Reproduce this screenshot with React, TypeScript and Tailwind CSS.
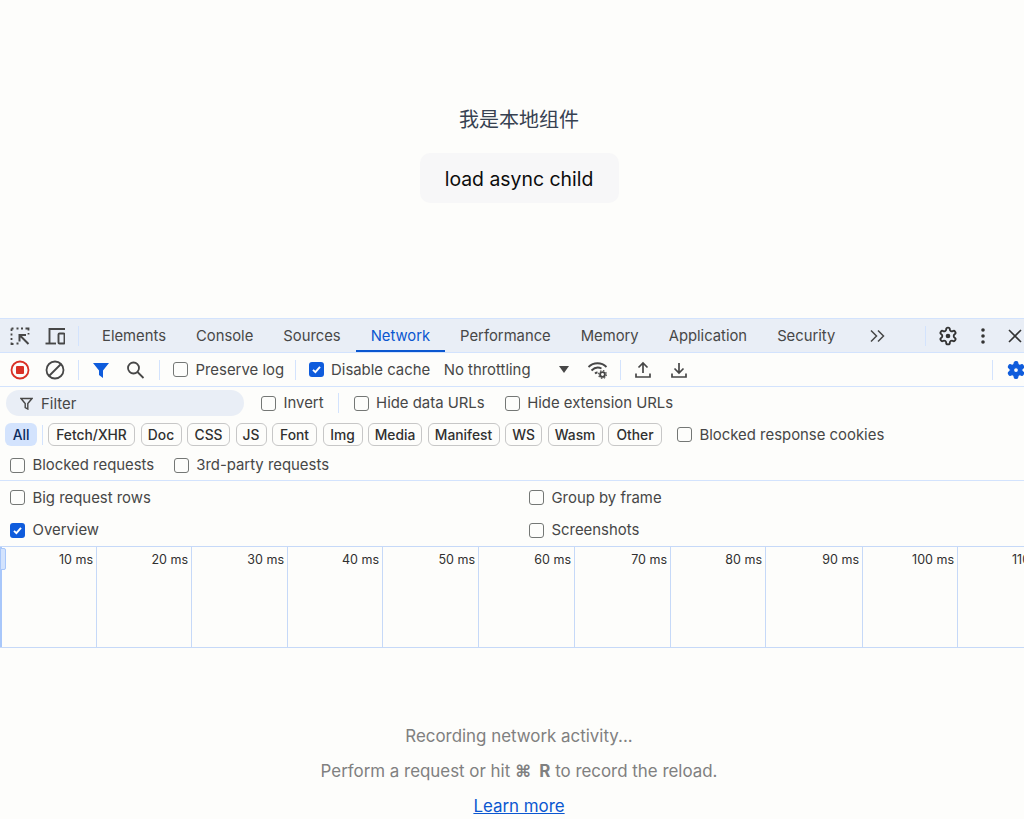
import React from "react";

const font = { fontFamily: '"Inter", "Noto Sans CJK SC", sans-serif' };
const GEAR =
  "M12.22 2h-.44a2 2 0 0 0-2 2v.18a2 2 0 0 1-1 1.73l-.43.25a2 2 0 0 1-2 0l-.15-.08a2 2 0 0 0-2.73.73l-.22.38a2 2 0 0 0 .73 2.73l.15.1a2 2 0 0 1 1 1.72v.51a2 2 0 0 1-1 1.74l-.15.09a2 2 0 0 0-.73 2.73l.22.38a2 2 0 0 0 2.73.73l.15-.08a2 2 0 0 1 2 0l.43.25a2 2 0 0 1 1 1.73V20a2 2 0 0 0 2 2h.44a2 2 0 0 0 2-2v-.18a2 2 0 0 1 1-1.73l.43-.25a2 2 0 0 1 2 0l.15.08a2 2 0 0 0 2.73-.73l.22-.39a2 2 0 0 0-.73-2.73l-.15-.08a2 2 0 0 1-1-1.74v-.5a2 2 0 0 1 1-1.74l.15-.09a2 2 0 0 0 .73-2.73l-.22-.38a2 2 0 0 0-2.73-.73l-.15.08a2 2 0 0 1-2 0l-.43-.25a2 2 0 0 1-1-1.73V4a2 2 0 0 0-2-2z";

function Check({ label, checked = false, className = "" }: { label: string; checked?: boolean; className?: string }) {
  return (
    <label className={"flex items-center gap-[7.500px] text-[14.9px] leading-[20px] text-[#474747] " + className}>
      {checked ? (
        <span className="flex h-[15px] w-[15px] items-center justify-center rounded-[3px] bg-[#0f5cdc]">
          <svg width="11" height="11" viewBox="0 0 11 11" fill="none"><path d="M2 5.8 4.400 8.200 9 2.800" stroke="#fff" strokeWidth="1.900" /></svg>
        </span>
      ) : (
        <span className="h-[15px] w-[15px] rounded-[3px] border border-[#747775] bg-[#fdfdfb]" />
      )}
      <span>{label}</span>
    </label>
  );
}

function VSep({ className = "" }: { className?: string }) {
  return <span className={"h-[20px] w-px shrink-0 bg-[#d3e3fd] " + className} />;
}

const tabs = ["Elements", "Console", "Sources", "Network", "Performance", "Memory", "Application", "Security"];
const chips: [string, string][] = [
  ["Fetch/XHR", "w-[87px]"], ["Doc", "w-[41px]"], ["CSS", "w-[43px]"], ["JS", "w-[31px]"], ["Font", "w-[45px]"],
  ["Img", "w-[40px]"], ["Media", "w-[54px]"], ["Manifest", "w-[72px]"], ["WS", "w-[37px]"], ["Wasm", "w-[55px]"], ["Other", "w-[54px]"],
];
const ticks = [
  ["10 ms", 95], ["20 ms", 95], ["30 ms", 96], ["40 ms", 95], ["50 ms", 96], ["60 ms", 96], ["70 ms", 96], ["80 ms", 95], ["90 ms", 97], ["100 ms", 95],
] as [string, number][];

export default function App() {
  return (
    <div style={font} className="flex h-[819px] w-[1024px] flex-col overflow-hidden bg-[#fdfdfb]">
      <div className="flex h-[318px] shrink-0 flex-col items-center bg-[#fdfdfb] pl-[14px]">
        <p className="mt-[108px] text-[20px] leading-[24px] text-[#374151]">我是本地组件</p>
        <button className="mt-[21px] h-[50px] w-[199px] rounded-[10px] bg-[#f7f7f8] pt-[4px] text-[19.400px] font-[430] text-[#0c0c0c]">load async child</button>
      </div>

      {/* tab bar */}
      <div className="flex h-[35px] shrink-0 items-center border-y border-[#d3e3fd] bg-[#e9eef6] text-[14.800px] text-[#474747]">
        <svg className="ml-[10px] shrink-0" width="20" height="20" viewBox="0 0 20 20" fill="none" stroke="#474747" strokeWidth="1.800">
          <path d="M1.500 2.500h2M6.500 2.500h2M11 2.500h2M15.500 2.500h3v2M18.500 7v1.500M1.500 2.500v2.500M1.500 7.500v2M1.500 12v2M1.500 16.500v1.500h2M6.500 17.500h2" />
          <path d="M18.500 18 9.500 9M9.500 15.500V9H16" strokeWidth="2" />
        </svg>
        <svg className="ml-[15px] shrink-0" width="20" height="20" viewBox="0 0 20 20" fill="none" stroke="#474747" strokeWidth="1.900">
          <path d="M4.500 17V3H20" />
          <path d="M.5 17.500h10.500" />
          <rect x="13.500" y="7.500" width="6" height="10" rx="1" />
        </svg>
        <VSep className="ml-[13px]" />
        <div className="ml-[8px] flex h-full">
          {tabs.map((t) => (
            <div key={t} className={"flex h-full items-center whitespace-nowrap border-b-2 px-[15px] pt-[3px] " + (t === "Network" ? "border-[#0b57d0] text-[#0b57d0]" : "border-transparent")}>{t}</div>
          ))}
        </div>
        <svg className="ml-[19px] shrink-0" width="18" height="18" viewBox="0 0 18 18" fill="none" stroke="#474747" strokeWidth="1.500"><path d="m2 3.500 5.500 5.500L2 14.500M9 3.500l5.500 5.500L9 14.500" /></svg>
        <VSep className="ml-[38px]" />
        <svg className="ml-[11.500px] shrink-0" width="20" height="20" viewBox="0 0 24 24" fill="none" stroke="#333" strokeWidth="2.200" strokeLinejoin="round">
          <path d={GEAR} />
          <circle cx="12" cy="12" r="2.800" fill="#333" strokeWidth="0" />
        </svg>
        <svg className="ml-[23px] shrink-0" width="4" height="16" viewBox="0 0 4 16" fill="#333"><circle cx="2" cy="2" r="1.800" /><circle cx="2" cy="8" r="1.800" /><circle cx="2" cy="14" r="1.800" /></svg>
        <svg className="ml-[23px] shrink-0" width="14" height="14" viewBox="0 0 14 14" fill="none" stroke="#333" strokeWidth="1.600"><path d="m1 1 12 12M13 1 1 13" /></svg>
      </div>

      {/* toolbar */}
      <div className="flex h-[34px] shrink-0 items-center border-b border-[#d3e3fd]">
        <svg className="ml-[10px] shrink-0" width="20" height="20" viewBox="0 0 20 20"><circle cx="10" cy="10" r="8.500" fill="none" stroke="#d93025" strokeWidth="1.800" /><rect x="6" y="6" width="8" height="8" rx="1" fill="#d93025" /></svg>
        <svg className="ml-[15px] shrink-0" width="20" height="20" viewBox="0 0 20 20" fill="none" stroke="#474747" strokeWidth="1.800"><circle cx="10" cy="10" r="8.500" /><path d="M4 16 16 4" /></svg>
        <VSep className="ml-[13px]" />
        <svg className="ml-[14px] shrink-0" width="16" height="16" viewBox="0 0 16 16" fill="#0f5cdc"><path d="M0 1h16L10 8.500V16L6 13V8.500z" /></svg>
        <svg className="ml-[16px] shrink-0" width="20" height="20" viewBox="0 0 20 20" fill="none" stroke="#474747" strokeWidth="1.800"><circle cx="8.500" cy="8" r="5.500" /><path d="m12.500 12 6 6" /></svg>
        <VSep className="ml-[14px]" />
        <Check label="Preserve log" className="ml-[13px]" />
        <VSep className="ml-[10.500px]" />
        <Check label="Disable cache" checked className="ml-[13px]" />
        <span className="ml-[13.500px] text-[14.900px] leading-[20px] text-[#474747]">No throttling</span>
        <svg className="ml-[27px] shrink-0" width="12" height="8" viewBox="0 0 12 8" fill="#474747"><path d="M1 0h10L6 7z" /></svg>
        <svg className="ml-[17px] shrink-0" width="22" height="20" viewBox="0 0 22 20" fill="none" stroke="#474747" strokeWidth="1.800">
          <path d="M1.500 7C6.500 2 14.500 2 19.500 7M4.500 10.500C7.500 7.500 11.500 7 14.500 8.500M8 13.500c.8-.7 1.500-1 2.500-1" />
          <circle cx="15.500" cy="14.500" r="2.400" strokeWidth="1.900" />
          <circle cx="15.500" cy="14.500" r="3.900" strokeWidth="1.100" strokeDasharray="1.500 1.560" />
        </svg>
        <VSep className="ml-[11px]" />
        <svg className="ml-[13px] shrink-0" width="18" height="18" viewBox="0 0 18 18" fill="none" stroke="#474747" strokeWidth="1.700"><path d="M9 12V2M4.500 6.500 9 2l4.500 4.500M2 12.500V16h14v-3.500" /></svg>
        <svg className="ml-[18px] shrink-0" width="18" height="18" viewBox="0 0 18 18" fill="none" stroke="#474747" strokeWidth="1.700"><path d="M9 2v10M4.500 7.500 9 12l4.500-4.500M2 12.500V16h14v-3.500" /></svg>
        <VSep className="ml-auto" />
        <svg className="ml-[13px] -mr-[2px] shrink-0" width="20" height="20" viewBox="0 0 24 24" fill="#0f5cdc" stroke="#0f5cdc" strokeWidth="1.500">
          <path fillRule="evenodd" d={GEAR + "M12 9a3 3 0 1 0 0 6 3 3 0 0 0 0-6z"} />
        </svg>
      </div>

      {/* filter row */}
      <div className="flex h-[32px] shrink-0 items-center">
        <div className="ml-[6px] flex h-[26px] w-[238px] items-center rounded-[13px] bg-[#e9eef6] text-[14.900px] leading-[20px] text-[#474747]">
          <svg className="ml-[14px]" width="13" height="13" viewBox="0 0 13 13" fill="none" stroke="#474747" strokeWidth="1.400"><path d="M1 1.500h11L7.800 6.500v5.500L5.200 10.500v-4z" /></svg>
          <span className="ml-[8px] pt-[1px]">Filter</span>
        </div>
        <Check label="Invert" className="ml-[17px]" />
        <VSep className="ml-[14px]" />
        <Check label="Hide data URLs" className="ml-[15px]" />
        <Check label="Hide extension URLs" className="ml-[20px]" />
      </div>

      {/* chips */}
      <div className="flex h-[31px] shrink-0 items-center">
        <span className="ml-[5px] flex h-[23px] w-[32px] items-center justify-center rounded-[6px] bg-[#d3e3fd] pt-[1px] text-[13.800px] font-medium text-[#0a2a5c]">All</span>
        <VSep className="ml-[5px]" />
        <div className="ml-[5px] flex gap-[5.500px]">
          {chips.map(([c, w]) => (
            <span key={c} className={"flex h-[23px] items-center justify-center rounded-[6px] border border-[#c7c7c7] pt-[1px] text-[13.800px] font-medium text-[#303030] " + w}>{c}</span>
          ))}
        </div>
        <Check label="Blocked response cookies" className="ml-[15px]" />
      </div>

      {/* blocked */}
      <div className="flex h-[31px] shrink-0 items-center border-b border-[#d3e3fd] pl-[10px]">
        <Check label="Blocked requests" />
        <Check label="3rd-party requests" className="ml-[19.500px]" />
      </div>

      {/* settings */}
      <div className="grid h-[65px] shrink-0 grid-cols-[519px_1fr] grid-rows-[33px_32px] items-center pl-[10px]">
        <Check label="Big request rows" />
        <Check label="Group by frame" />
        <Check label="Overview" checked />
        <Check label="Screenshots" />
      </div>

      {/* overview */}
      <div className="relative flex h-[102px] shrink-0 border-y border-[#c6d9f8]">
        <span className="absolute left-0 top-[1px] h-[22px] w-[6px] rounded-r-[2px] border border-[#a8c7fa] bg-[#d3e3fd]" />
        <div className="flex w-full border-l-2 border-[#a8c7fa]">
          {ticks.map(([t, w]) => (
            <div key={t} style={{ width: w }} className="h-full shrink-0 border-r border-[#c6d9f8] pr-[3px] pt-[5px] text-right text-[12.500px] leading-[16px] text-[#303030]">{t}</div>
          ))}
          <div className="whitespace-nowrap pl-[54px] pt-[5px] text-[12.500px] leading-[16px] text-[#303030]">110 ms</div>
        </div>
      </div>

      {/* empty */}
      <div className="flex flex-1 flex-col items-center pl-[14px] text-[16.900px] text-[#808080]">
        <p className="mt-[76px] leading-[24px]">Recording network activity...</p>
        <p className="mt-[11px] leading-[24px]">Perform a request or hit <b className="font-bold">⌘&nbsp;&nbsp;R</b> to record the reload.</p>
        <a className="mt-[11px] leading-[24px] text-[#0b57d0] underline">Learn more</a>
      </div>
    </div>
  );
}
